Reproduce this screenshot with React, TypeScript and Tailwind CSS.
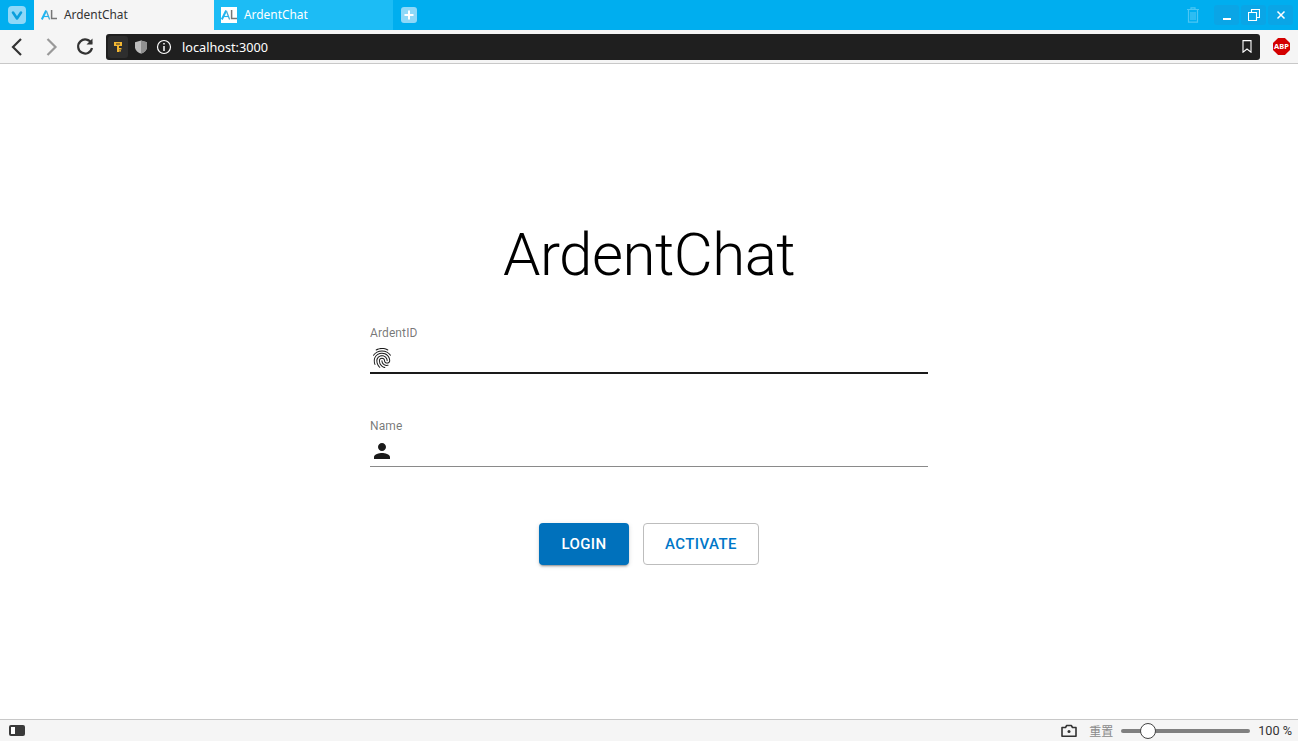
import { MdFingerprint, MdPerson } from "react-icons/md"

function Favicon({ boxed }: { boxed?: boolean }) {
  return (
    <svg viewBox="0 0 16 16" className={boxed ? "h-4 w-4 bg-white" : "h-4 w-4"} fill="none">
      <path d="M.8 12.5 5.2 3.5" stroke="#1fb5f2" strokeWidth="2" />
      <path d="M5.4 4 8.6 12.5" stroke="#4fa9d0" strokeWidth="1.3" />
      <path d="M3 9.5H8" stroke="#1fb5f2" strokeWidth="1.2" />
      <path d="M10.6 3v8.6H16" stroke="#777" strokeWidth="1.5" />
    </svg>
  )
}

function Tab({ active }: { active?: boolean }) {
  return (
    <div
      className={
        active
          ? "flex h-[30px] w-[180px] items-center gap-[7px] bg-[#f5f5f5] pl-[7px] text-[#333]"
          : "flex h-[30px] w-[179px] items-center gap-[7px] bg-[#1cbcf5] pl-[7px] text-white"
      }
    >
      <Favicon boxed={!active} />
      <span className="text-[11.9px]">ArdentChat</span>
    </div>
  )
}

function WinButton({ children }: { children: React.ReactNode }) {
  return (
    <div className="flex h-[20px] w-[25px] items-center justify-center rounded-[3px] bg-[#0aa5e6]">
      {children}
    </div>
  )
}

function Field({
  label,
  focused,
  icon,
}: {
  label: string
  focused?: boolean
  icon: React.ReactNode
}) {
  return (
    <div className="w-full">
      <div className="text-[12px] leading-[14px] tracking-[0.11px] text-black/55">{label}</div>
      <div
        className={
          focused
            ? "flex h-[34px] items-center border-b-2 border-[#1a1a1a] pt-[3px]"
            : "flex h-[34px] items-center border-b border-[#8a8a8a] pt-[3px]"
        }
      >
        {icon}
      </div>
    </div>
  )
}

export default function App() {
  return (
    <div className="flex h-[741px] flex-col overflow-hidden bg-white font-['Noto_Sans',sans-serif]">
      {/* tab strip */}
      <div className="flex h-[30px] shrink-0 items-center bg-[#00aeef]">
        <div className="flex w-[34px] justify-center">
          <div className="flex h-[18px] w-[18px] items-center justify-center rounded-[4px] bg-[#8ed8f8]">
            <svg viewBox="0 0 18 18" className="h-[18px] w-[18px]" fill="none">
              <path d="M5 6.5 9 12.5 13 6.5" stroke="#0a9fdc" strokeWidth="2.6" strokeLinecap="round" strokeLinejoin="round" />
            </svg>
          </div>
        </div>
        <Tab active />
        <Tab />
        <div className="ml-[8px] flex h-[16px] w-[16px] items-center justify-center rounded-[3px] bg-[#8ed8f8]">
          <svg viewBox="0 0 16 16" className="h-4 w-4" fill="none">
            <path d="M8 3.5v9M3.5 8h9" stroke="#fff" strokeWidth="2" />
          </svg>
        </div>
        <div className="flex-1" />
        <svg viewBox="0 0 16 18" className="mr-[13px] h-[18px] w-[16px]" fill="none" stroke="#4cc6f4" strokeWidth="1.2">
          <path d="M2 3.5h12M6 3.5V1.8h4v1.7M3.5 3.5v12.7h9V3.5M6 6v8M8 6v8M10 6v8" />
        </svg>
        <div className="mr-[5px] flex gap-[2px]">
          <WinButton>
            <div className="mt-[7px] h-[2px] w-[8px] bg-white" />
          </WinButton>
          <WinButton>
            <svg viewBox="0 0 12 12" className="h-3 w-3" fill="none" stroke="#fff" strokeWidth="1.1">
              <path d="M.5 3.5h8v8h-8zM3.5 3V.5h8v8H9" />
            </svg>
          </WinButton>
          <WinButton>
            <svg viewBox="0 0 10 10" className="h-[10px] w-[10px]" fill="none" stroke="#fff" strokeWidth="1.5">
              <path d="M1.5 1.5l7 7M8.5 1.5l-7 7" />
            </svg>
          </WinButton>
        </div>
      </div>

      {/* address bar */}
      <div className="flex h-[34px] shrink-0 items-center border-b border-[#c8c8c8] bg-[#f5f5f5]">
        <svg viewBox="0 0 24 24" className="ml-[5px] h-6 w-6" fill="none" stroke="#333" strokeWidth="2.2">
          <path d="M16.5 4.5 8.5 12.5 16.5 20.5" transform="translate(-.5 -.5)" />
        </svg>
        <svg viewBox="0 0 24 24" className="ml-[11px] h-6 w-6" fill="none" stroke="#999" strokeWidth="2.2">
          <path d="M8 4.5 16 12.5 8 20.5" transform="translate(-.5 -.5)" />
        </svg>
        <svg viewBox="0 0 24 24" className="ml-[9px] h-6 w-6" fill="none" stroke="#333" strokeWidth="2.2">
          <path d="M18.5 8.5A7 7 0 1 0 19 13" />
          <path d="M19.5 3.5v6h-6" fill="#333" stroke="none" />
        </svg>
        <div className="ml-[9px] flex h-[26px] w-[1154px] items-center rounded-[3px] bg-[#1f1f1f] pl-[2px] pr-[8px]">
          <div className="flex h-[22px] w-[20px] items-center justify-center rounded-[3px] bg-[#2e2e2e]">
            <svg viewBox="0 0 10 12" className="h-[12px] w-[10px]" fill="#f2b632">
              <path d="M1 1h8v4H6v6H4V5H1zM3 2.5v1h4v-1zM6 7h2.5v1.4H6zM6 9.2h2v1.4H6z" fillRule="evenodd" />
            </svg>
          </div>
          <svg viewBox="0 0 14 14" className="ml-[6px] h-[14px] w-[14px]">
            <path d="M1 2.2 7 .6l6 1.6v5c0 3-3 5.4-6 6.4-3-1-6-3.4-6-6.4z" fill="#bdbdbd" />
            <path d="M7 .6l6 1.6v5c0 3-3 5.4-6 6.4z" fill="#8f8f8f" />
          </svg>
          <svg viewBox="0 0 16 16" className="ml-[8px] h-4 w-4" fill="none" stroke="#fff">
            <circle cx="8" cy="8" r="6.5" strokeWidth="1.2" />
            <path d="M8 7v5M8 4v1.6" strokeWidth="1.5" />
          </svg>
          <span className="ml-[10px] pt-[2px] text-[12.7px] text-white">localhost:3000</span>
          <div className="flex-1" />
          <svg viewBox="0 0 10 13" className="h-[13px] w-[10px]" fill="none" stroke="#fff" strokeWidth="1.1">
            <path d="M1 .6h8v11.6L5 9 1 12.2z" />
          </svg>
        </div>
        <div className="ml-[13px] flex h-[17px] w-[17px] items-center justify-center bg-[#d40000] text-[7.5px] font-bold text-white [clip-path:polygon(30%_0,70%_0,100%_30%,100%_70%,70%_100%,30%_100%,0_70%,0_30%)]">
          ABP
        </div>
      </div>

      {/* page */}
      <div className="flex min-h-0 flex-1 flex-col items-center pt-[156px] font-['Roboto',sans-serif]">
        <h1 className="text-[60px] font-light leading-[70px] tracking-[-0.5px] text-black">ArdentChat</h1>
        <div className="mt-[36px] flex w-[558px] flex-col gap-[45px]">
          <Field label="ArdentID" focused icon={<MdFingerprint className="h-6 w-6 text-[#1a1a1a]" />} />
          <Field label="Name" icon={<MdPerson className="h-6 w-6 text-[#1a1a1a]" />} />
        </div>
        <div className="mt-[56px] flex gap-[14px]">
          <button className="h-[42px] w-[90px] rounded-[4px] bg-[#0071bc] text-[15px] font-medium tracking-[0.43px] text-white shadow-[0_3px_1px_-2px_rgba(0,0,0,0.2),0_2px_2px_0_rgba(0,0,0,0.14),0_1px_5px_0_rgba(0,0,0,0.12)]">
            LOGIN
          </button>
          <button className="h-[42px] w-[116px] rounded-[4px] border border-[#bdbdbd] bg-white text-[15px] font-medium tracking-[0.43px] text-[#0077c8]">
            ACTIVATE
          </button>
        </div>
      </div>

      {/* status bar */}
      <div className="flex h-[22px] shrink-0 items-center border-t border-[#c8c8c8] bg-[#f5f5f5]">
        <div className="ml-[9px] flex h-[11px] w-[16px] items-center rounded-[2px] bg-[#3a3a3a] pl-[2px]">
          <div className="h-[7px] w-[4px] bg-white" />
        </div>
        <div className="flex-1" />
        <svg viewBox="0 0 16 13" className="h-[13px] w-[16px]" fill="none" stroke="#333" strokeWidth="1.6">
          <path d="M1 3.5h3.5l1.2-2h4.6l1.2 2H15v8.7H1z" strokeLinejoin="round" />
          <circle cx="8" cy="7.5" r="1.5" fill="#333" stroke="none" />
        </svg>
        <span className="ml-[12px] font-['Noto_Sans_CJK_SC',sans-serif] text-[12px] text-[#8a8a8a]">重置</span>
        <div className="relative ml-[8px] h-[4px] w-[129px] rounded-full bg-[#808080]">
          <div className="absolute left-[19px] top-[-6px] h-4 w-4 rounded-full border border-[#444] bg-white" />
        </div>
        <span className="ml-[8px] mr-[6px] font-['Roboto',sans-serif] text-[12.7px] text-[#333]">100 %</span>
      </div>
    </div>
  )
}
